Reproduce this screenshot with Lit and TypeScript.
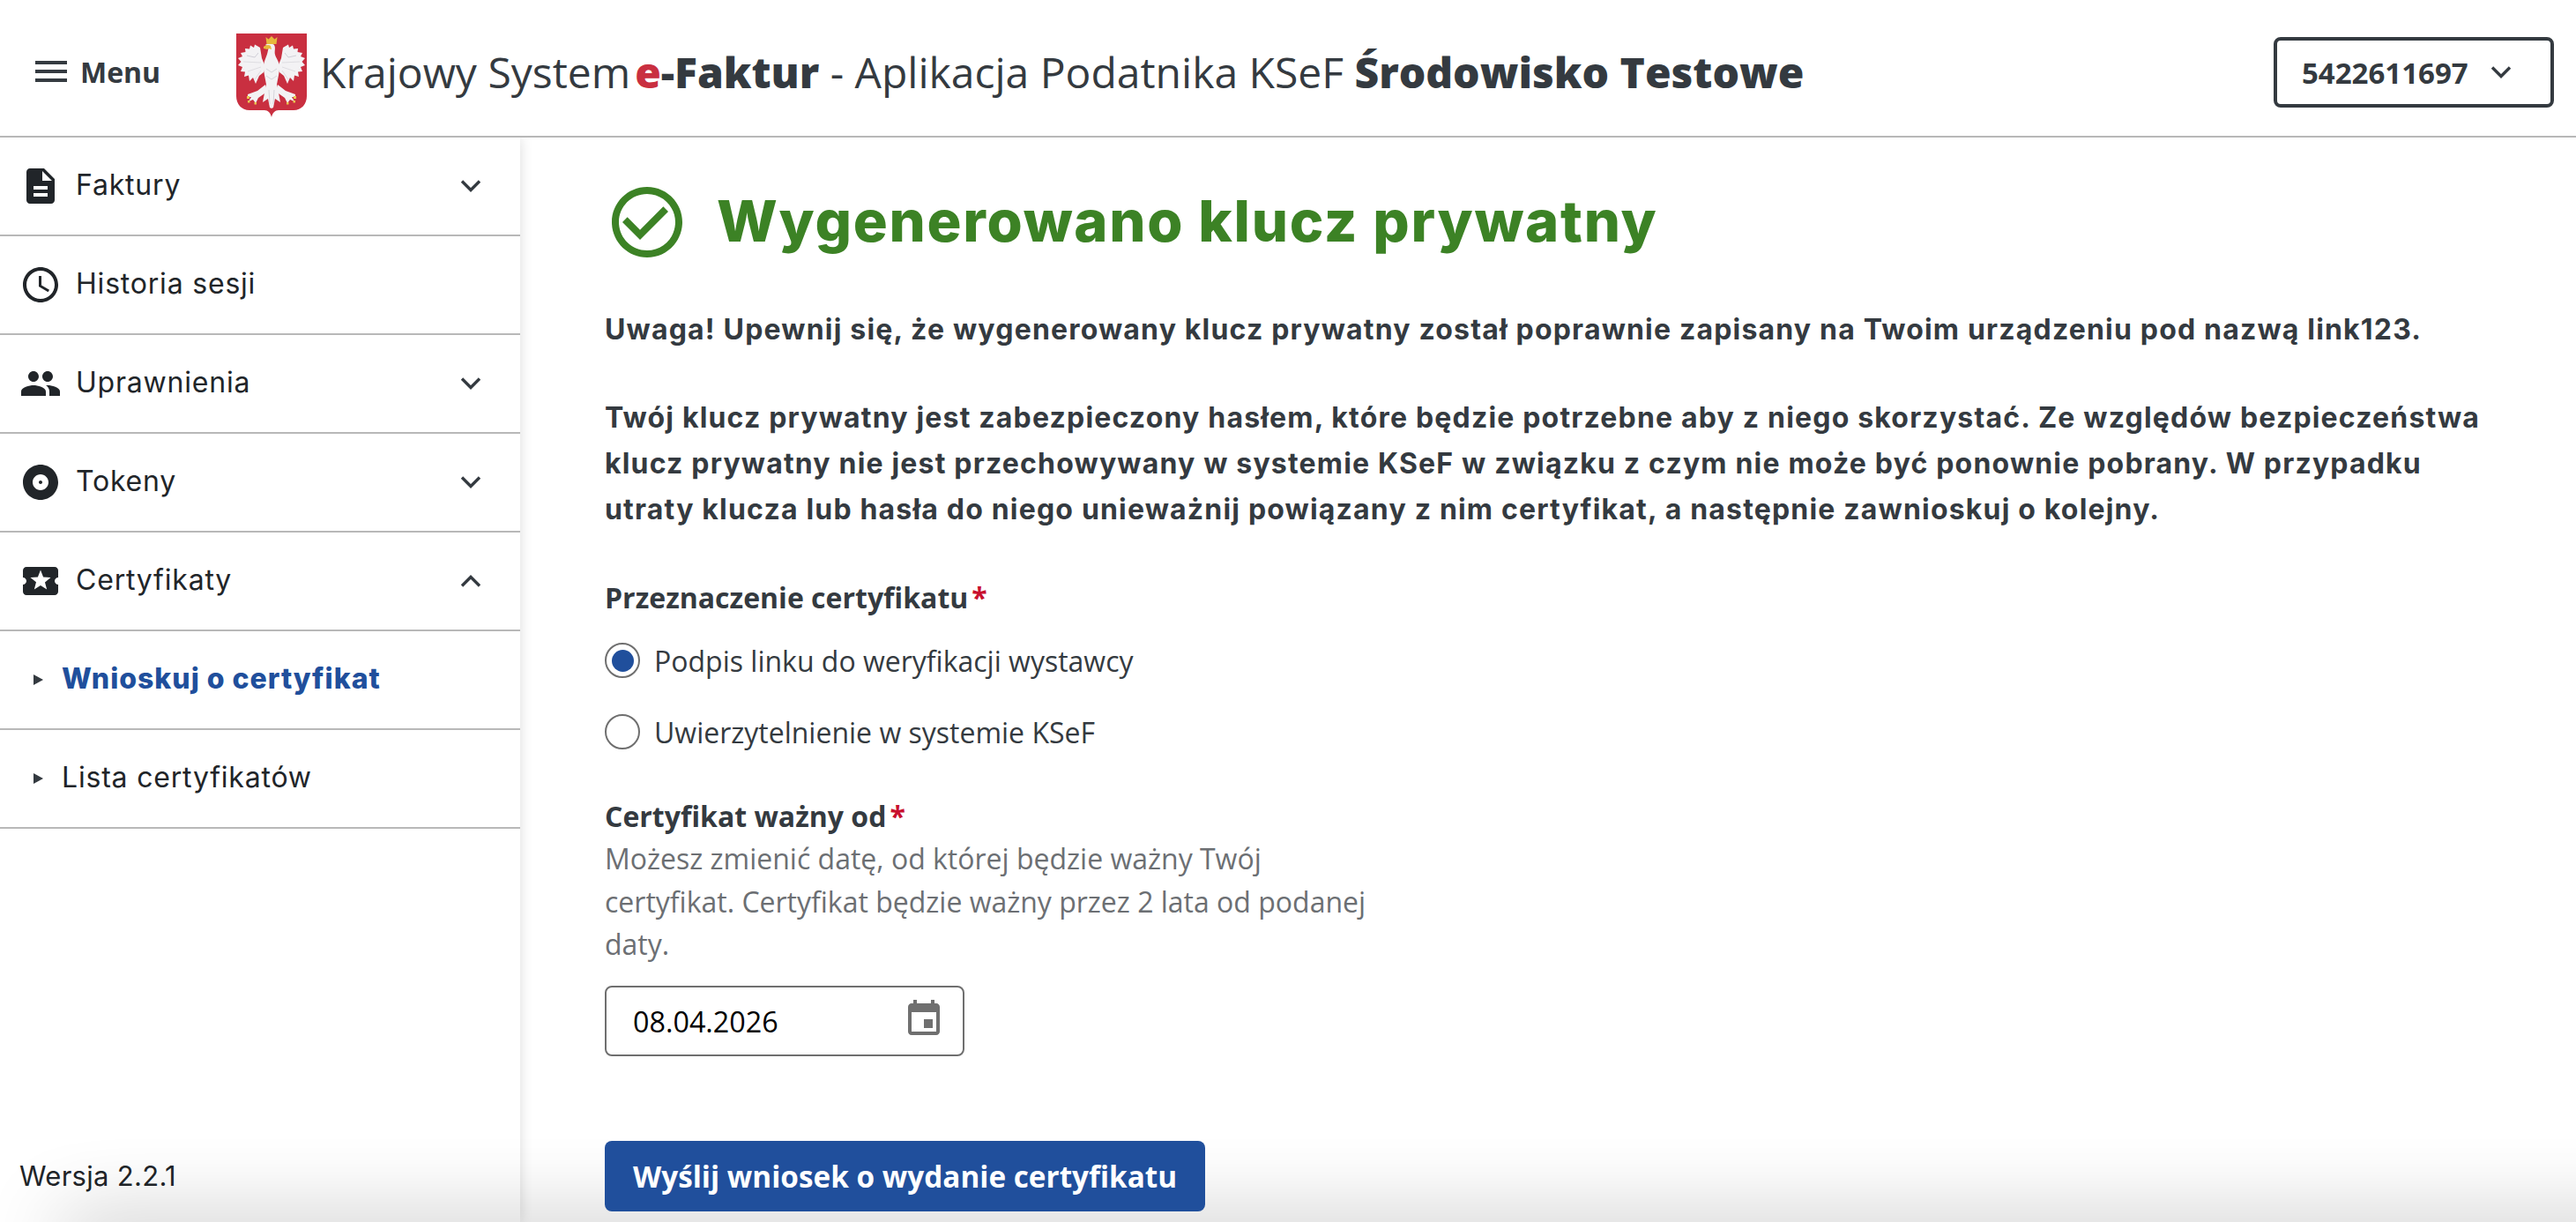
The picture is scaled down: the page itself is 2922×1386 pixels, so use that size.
import { LitElement, html, css, svg } from "lit";
import { customElement } from "lit/decorators.js";

const ICONS = {
  description:
    "M14 2H6c-1.1 0-1.99.9-1.99 2L4 20c0 1.1.89 2 1.99 2H18c1.1 0 2-.9 2-2V8l-6-6zm2 16H8v-2h8v2zm0-4H8v-2h8v2zm-3-5V3.5L18.5 9H13z",
  schedule:
    "M11.99 2C6.47 2 2 6.48 2 12s4.47 10 9.99 10C17.52 22 22 17.52 22 12S17.52 2 11.99 2zM12 20c-4.42 0-8-3.58-8-8s3.58-8 8-8 8 3.58 8 8-3.58 8-8 8zm.5-13H11v6l5.25 3.15.75-1.23-4.5-2.67z",
  people:
    "M16 11c1.66 0 2.99-1.34 2.99-3S17.66 5 16 5c-1.66 0-3 1.34-3 3s1.34 3 3 3zm-8 0c1.66 0 2.99-1.34 2.99-3S9.66 5 8 5C6.34 5 5 6.34 5 8s1.34 3 3 3zm0 2c-2.33 0-7 1.17-7 3.5V19h14v-2.5c0-2.33-4.67-3.5-7-3.5zm8 0c-.29 0-.62.02-.97.05 1.16.84 1.97 1.97 1.97 3.45V19h6v-2.5c0-2.33-4.67-3.5-7-3.5z",
  album:
    "M12 2C6.48 2 2 6.48 2 12s4.48 10 10 10 10-4.48 10-10S17.52 2 12 2zm0 14.5c-2.49 0-4.5-2.01-4.5-4.5S9.51 7.5 12 7.5s4.5 2.01 4.5 4.5-2.01 4.5-4.5 4.5zm0-5.5c-.55 0-1 .45-1 1s.45 1 1 1 1-.45 1-1-.45-1-1-1z",
  activity:
    "M20 12c0-1.1.9-2 2-2V6c0-1.1-.9-2-2-2H4c-1.1 0-1.99.9-1.99 2v4c1.1 0 1.99.9 1.99 2s-.89 2-2 2v4c0 1.1.9 2 2 2h16c1.1 0 2-.9 2-2v-4c-1.1 0-2-.9-2-2zm-4.42 4.8L12 14.5l-3.58 2.3 1.08-4.12-3.29-2.69 4.24-.25L12 5.8l1.54 3.95 4.24.25-3.29 2.69 1.09 4.11z",
  event:
    "M17 12h-5v5h5v-5zM16 1v2H8V1H6v2H5c-1.11 0-1.99.9-1.99 2L3 19c0 1.1.89 2 2 2h14c1.1 0 2-.9 2-2V5c0-1.1-.9-2-2-2h-1V1h-2zm3 18H5V8h14v11z",
  check:
    "M16.59 7.58L10 14.17l-3.59-3.58L5 12l5 5 8-8zM12 2C6.48 2 2 6.48 2 12s4.48 10 10 10 10-4.48 10-10S17.52 2 12 2zm0 18c-4.42 0-8-3.58-8-8s3.58-8 8-8 8 3.58 8 8-3.58 8-8 8z",
};

const icon = (name: keyof typeof ICONS, cls = "icon") => html`
  <svg class=${cls} viewBox="0 0 24 24" fill="currentColor" aria-hidden="true">
    <path d=${ICONS[name]} />
  </svg>
`;

const chevron = (up = false) => html`
  <svg class="chevron" viewBox="0 0 24 14" fill="none" stroke="currentColor" stroke-width="3.4" aria-hidden="true">
    <path d=${up ? "M2 12.5 12 2.5l10 10" : "M2 1.5l10 10 10-10"} />
  </svg>
`;

// one half of the eagle, given as offsets from the shield's centre line
const poly = (side: 1 | -1, pts: number[][]) =>
  pts.map(([x, y]) => `${40 + side * x},${y}`).join(" ");

const WING = [
  [7, 38], [11, 28], [13, 16], [19, 12.5], [20, 16], [24, 13.5], [25, 17.5], [30, 17],
  [29.5, 21], [35, 22], [33, 26], [38, 28], [34.5, 32], [38, 36], [33, 38], [35, 43],
  [30, 43.5], [31, 49], [26, 47.5], [25, 54], [21, 50], [18, 57], [14, 48], [9, 44],
];
const LEG = [[7, 58], [16, 65], [27, 69], [27, 72], [23, 72], [26, 77], [21, 75], [18, 79], [15, 73], [5, 66]];

const half = (side: 1 | -1) => svg`
  <polygon fill="#f3f2f4" points=${poly(side, WING)} />
  <polyline fill="none" stroke="#c6c5ce" stroke-width=".8" points=${poly(side, [[15, 22], [19, 27], [28, 25]])} />
  <polyline fill="none" stroke="#d5d4da" stroke-width=".7" points=${poly(side, [[12, 33], [32, 32]])} />
  <polyline fill="none" stroke="#d5d4da" stroke-width=".7" points=${poly(side, [[12, 38], [27, 43]])} />
  <polyline fill="none" stroke="#d5d4da" stroke-width=".7" points=${poly(side, [[12, 42], [19, 52]])} />
  <polygon fill="#f3f2f4" points=${poly(side, LEG)} />
  <polygon fill="#e9c64f" points=${poly(side, [[25, 71], [28, 71], [28, 74], [25, 74]])} />
  <polygon fill="#e9c64f" points=${poly(side, [[24.500, 76], [27, 76], [27, 78.500], [24.500, 78.500]])} />
  <polygon fill="#e9c64f" points=${poly(side, [[17, 78], [19.500, 78], [19.500, 80.500], [17, 80.500]])} />
`;

@customElement("app-root")
export class AppRoot extends LitElement {
  static styles = css`
    :host {
      display: block;
      position: relative;
      height: 1386px;
      overflow: hidden;
      background: #fff;
      color: #343a40;
      font-family: "Open Sans", "Liberation Sans", sans-serif;
    }

    header {
      display: flex;
      align-items: center;
      box-sizing: border-box;
      height: 156px;
      padding: 10px 25px 0 40px;
      border-bottom: 2px solid #b8b8b8;
    }

    .menu {
      display: flex;
      align-items: center;
      gap: 15px;
      width: 228px;
      margin-top: -2px;
      font-size: 32px;
      font-weight: 700;
    }

    .menu svg {
      width: 36px;
      height: 24px;
    }

    .logo {
      width: 80px;
      height: 95px;
      flex-shrink: 0;
      margin-top: 7px;
    }

    .title {
      flex: 1;
      margin: -2px 0 0 15px;
      font-size: 48px;
      white-space: nowrap;
    }

    .title b {
      font-weight: 800;
    }

    .title i {
      margin-left: 5px;
      font-style: normal;
      font-weight: 800;
      color: #c92f40;
    }

    .nip {
      display: flex;
      align-items: center;
      justify-content: space-between;
      box-sizing: border-box;
      width: 318px;
      height: 80px;
      padding: 0 44px 0 28px;
      border: 4px solid #343a40;
      border-radius: 8px;
      font-size: 33px;
      font-weight: 700;
    }

    .nip .chevron {
      width: 24px;
      height: 14px;
    }

    .body {
      display: flex;
      height: 1230px;
    }

    aside {
      display: flex;
      flex-direction: column;
      width: 590px;
      flex-shrink: 0;
      position: relative;
      box-shadow: 0 0 14px rgba(0, 0, 0, 0.14);
      clip-path: inset(0 -30px 0 0);
      font-family: Inter, "Liberation Sans", sans-serif;
      color: #212529;
    }

    .row {
      display: flex;
      align-items: center;
      box-sizing: border-box;
      height: 112px;
      padding: 0 44px 0 22px;
      border-bottom: 2px solid #b8b8b8;
      font-size: 32px;
      letter-spacing: 0.8px;
    }

    .row .icon {
      width: 48px;
      height: 48px;
      margin-right: 16px;
      flex-shrink: 0;
    }

    .row span {
      flex: 1;
      margin-top: -4px;
    }

    .row .chevron {
      width: 24px;
      height: 14px;
      color: #343a40;
    }

    .row.sub {
      padding-left: 38px;
    }

    .row.sub .tri {
      width: 0;
      height: 0;
      margin-right: 21px;
      border-left: 11px solid #343a40;
      border-top: 6.5px solid transparent;
      border-bottom: 6.5px solid transparent;
    }

    .row.active {
      color: #204f9c;
      font-weight: 800;
      letter-spacing: 1px;
    }

    .version {
      margin-top: auto;
      padding: 0 0 34px 22px;
      font-size: 31px;
      letter-spacing: 0.3px;
    }

    main {
      flex: 1;
      padding: 48px 96px 0;
    }

    h1 {
      display: flex;
      align-items: center;
      gap: 31px;
      height: 96px;
      margin: 0 0 48px;
      font-family: Inter, "Liberation Sans", sans-serif;
      font-size: 65px;
      font-weight: 800;
      letter-spacing: 1.75px;
      color: #3c8225;
    }

    h1 svg {
      width: 96px;
      height: 96px;
    }

    h1 span {
      margin-top: -4px;
    }

    .warn {
      margin: 0 0 48px;
      max-width: 2140px;
      font-family: Inter, "Liberation Sans", sans-serif;
      font-size: 32px;
      font-weight: 700;
      letter-spacing: 1.18px;
      line-height: 52px;
    }

    .warn.last {
      margin-bottom: 50px;
    }

    .label {
      font-size: 32px;
      font-weight: 700;
      line-height: 48px;
    }

    .label em {
      margin-left: 4px;
      font-style: normal;
      color: #c8102e;
    }

    .radios {
      display: flex;
      flex-direction: column;
      gap: 41px;
      margin-top: 27px;
    }

    .radio {
      display: flex;
      align-items: center;
      gap: 16px;
      height: 40px;
      font-size: 32px;
    }

    .dot {
      display: flex;
      align-items: center;
      justify-content: center;
      box-sizing: border-box;
      width: 40px;
      height: 40px;
      border: 2px solid #6f6f6f;
      border-radius: 50%;
    }

    .dot.on::after {
      content: "";
      width: 25px;
      height: 25px;
      border-radius: 50%;
      background: #204f9c;
    }

    .field {
      margin-top: 52px;
    }

    .hint {
      max-width: 880px;
      font-size: 32px;
      line-height: 48.5px;
      color: #6c6f73;
    }

    .date {
      display: flex;
      align-items: center;
      justify-content: space-between;
      box-sizing: border-box;
      width: 408px;
      height: 80px;
      margin-top: 22px;
      padding: 0 20px 0 30px;
      border: 2px solid #6f6f6f;
      border-radius: 8px;
      font-size: 32.3px;
      color: #000;
    }

    .date svg {
      width: 48px;
      height: 48px;
      color: #6f6f6f;
      margin-top: -4px;
    }

    .send {
      display: block;
      position: relative;
      z-index: 1;
      box-sizing: border-box;
      height: 80px;
      margin-top: 96px;
      padding: 0 32px;
      border: 0;
      border-radius: 8px;
      background: #204f9c;
      color: #fff;
      font: 700 33.3px "Open Sans", sans-serif;
    }

    .fold {
      position: absolute;
      left: 70px;
      right: -100px;
      top: 1386px;
      height: 40px;
      box-shadow: 0 0 90px rgba(0, 0, 0, 0.3);
      pointer-events: none;
    }
  `;

  render() {
    return html`
      <header>
        <div class="menu">
          <svg viewBox="0 0 36 24" fill="#343a40" aria-hidden="true">
            <rect y="0" width="36" height="4" />
            <rect y="10" width="36" height="4" />
            <rect y="20" width="36" height="4" />
          </svg>
          Menu
        </div>
        <svg class="logo" viewBox="0 0 80 95" aria-hidden="true">
          <path fill="#c92f40" d="M0 0h80v71c0 9-6 16-15 16H48c-4 0-7 3-8 8-1-5-4-8-8-8H15C6 87 0 80 0 71Z" />
          ${half(1)} ${half(-1)}
          <path fill="#f3f2f4" d="M36 19c1-2 0-4-1-5l-2-1c2-2 8-2 10 0 2 3 0 7 1 11 1 4 5 8 5 14 0 7-2 13-3 20l1 4 3 16-6-4-2 10-2 1-2-1-2-10-6 4 3-16 1-4c-1-7-3-13-3-20 0-7 4-12 5-19Z" />
          <path fill="none" stroke="#c9c8d0" stroke-width=".7" d="M34 40l6 4 6-4M34 48l6 4 6-4M37 64l1 16M43 64l-1 16" />
          <path fill="#e7b83c" d="M33.500 4l3 2.500L40 3l3.500 3.500 3-2.500-1 8h-11Z" />
          <path fill="#e7b83c" d="M31 15c2-2 6-3 8-1l1 4-3-1-2 1-4-1Z" />
        </svg>
        <div class="title">
          Krajowy System<i>e</i><b>-Faktur</b> - Aplikacja Podatnika KSeF <b>Środowisko Testowe</b>
        </div>
        <div class="nip">5422611697 ${chevron()}</div>
      </header>
      <div class="body">
        <aside>
          <div class="row">${icon("description")}<span>Faktury</span>${chevron()}</div>
          <div class="row">${icon("schedule")}<span>Historia sesji</span></div>
          <div class="row">${icon("people")}<span>Uprawnienia</span>${chevron()}</div>
          <div class="row">${icon("album")}<span>Tokeny</span>${chevron()}</div>
          <div class="row">${icon("activity")}<span>Certyfikaty</span>${chevron(true)}</div>
          <div class="row sub active"><div class="tri"></div><span>Wnioskuj o certyfikat</span></div>
          <div class="row sub"><div class="tri"></div><span>Lista certyfikatów</span></div>
          <div class="version">Wersja 2.2.1</div>
        </aside>
        <main>
          <h1>${icon("check", "")}<span>Wygenerowano klucz prywatny</span></h1>
          <p class="warn">
            Uwaga! Upewnij się, że wygenerowany klucz prywatny został poprawnie zapisany na Twoim urządzeniu pod nazwą link123.
          </p>
          <p class="warn last">
            Twój klucz prywatny jest zabezpieczony hasłem, które będzie potrzebne aby z niego skorzystać. Ze względów bezpieczeństwa klucz prywatny nie jest przechowywany w systemie KSeF w związku z czym nie może być ponownie pobrany. W przypadku utraty klucza lub hasła do niego unieważnij powiązany z nim certyfikat, a następnie zawnioskuj o kolejny.
          </p>
          <div class="label">Przeznaczenie certyfikatu<em>*</em></div>
          <div class="radios">
            <div class="radio"><div class="dot on"></div>Podpis linku do weryfikacji wystawcy</div>
            <div class="radio"><div class="dot"></div>Uwierzytelnienie w systemie KSeF</div>
          </div>
          <div class="field">
            <div class="label">Certyfikat ważny od<em>*</em></div>
            <div class="hint">Możesz zmienić datę, od której będzie ważny Twój certyfikat. Certyfikat będzie ważny przez 2 lata od podanej daty.</div>
            <div class="date">08.04.2026 ${icon("event", "")}</div>
          </div>
          <button class="send">Wyślij wniosek o wydanie certyfikatu</button>
        </main>
      </div>
      <div class="fold"></div>
    `;
  }
}
